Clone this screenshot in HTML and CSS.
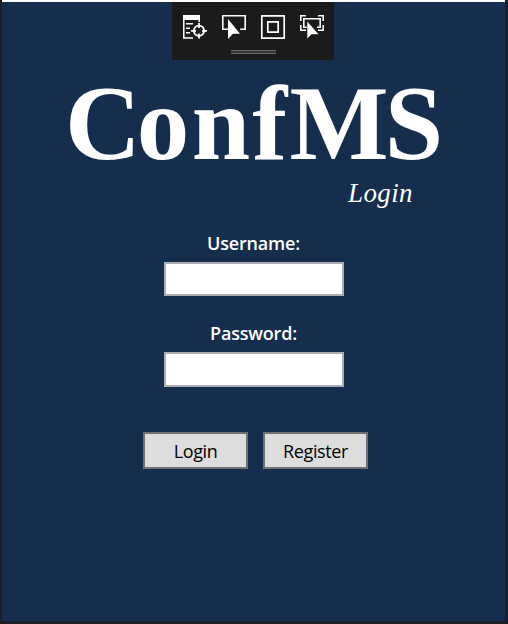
FILE: index.html
```html
<!DOCTYPE html>
<html lang="en">
<head>
<meta charset="utf-8">
<title>ConfMS Login</title>
<link rel="stylesheet" href="styles.css">
</head>
<body>
<main class="window">
  <div class="toolbar">
    <div class="tools">
      <svg width="26" height="26" viewBox="0 0 26 26" fill="none" stroke="#fff" stroke-width="1.5">
        <path d="M1 1h17v5H1z" fill="#fff" stroke="none"/>
        <path d="M1.8 5v19H11M17.2 5v3M4 9.8h7M4 14.2h4M4 18.8h4"/>
        <circle cx="17" cy="16.8" r="5.2" stroke-width="1.8"/>
        <path d="M17 9v5M17 19.6v5M9 16.8h5M20 16.8h5" stroke-width="1.8"/>
      </svg>
      <svg width="26" height="26" viewBox="0 0 26 26" fill="none" stroke="#fff" stroke-width="1.6">
        <path d="M7 15.2H1.8V1.8h22.4v13.4h-5"/>
        <path d="M7 5v20l5-5.2h7z" fill="#fff" stroke="none"/>
      </svg>
      <svg width="26" height="26" viewBox="0 0 26 26" fill="none" stroke="#fff" stroke-width="1.7">
        <path d="M1.8 1.8h22.4v22.4H1.8zM7.8 7.8h10.4v10.4H7.8z"/>
      </svg>
      <svg width="26" height="26" viewBox="0 0 26 26" fill="none" stroke="#fff" stroke-width="1.6">
        <path d="M1.8 7V1.8H7M19 1.8h5.2V7M1.8 11v5.2H7M24.2 11v5.2H19M8 13.2H4.8V4.8h16.4v8.4H18"/>
        <path d="M8 7v18l4.5-4.5H20z" fill="#fff" stroke="#1b1b1c" stroke-width=".6"/>
      </svg>
    </div>
    <div class="grip"></div>
  </div>
  <h1 class="brand"><span class="tight">C</span><span class="loose">onf</span><span class="tight">M</span>S</h1>
  <p class="subtitle">Login</p>
  <form class="form">
    <label class="label" for="user">Username:</label>
    <input class="input" id="user" type="text">
    <label class="label second" for="pass">Password:</label>
    <input class="input taller" id="pass" type="password">
    <div class="actions">
      <button class="button" type="button">Login</button>
      <button class="button" type="button">Register</button>
    </div>
  </form>
</main>
</body>
</html>
```
FILE: styles.css
```css
* { box-sizing: border-box; }
body { margin: 0; background: #1b1e22; }
.window {
  height: 621px;
  margin: 0 3px 3px 2px;
  border-top: 2px solid #fff;
  background: #152e4d;
  color: #fff;
  overflow: hidden;
}
.toolbar {
  width: 162px;
  height: 58px;
  margin-left: 170px;
  padding-top: 12px;
  background: #1b1b1c;
}
.tools { display: flex; gap: 13px; padding-left: 10px; }
.tools svg { display: block; flex: none; }
.grip {
  width: 45px;
  height: 4px;
  margin: 10px 0 0 59px;
  border: solid #6b6b6d;
  border-width: 1px 0;
  background: #333337;
}
.brand {
  height: 100px;
  margin: 14px 0 0 63px;
  font: bold 105px/100px "Liberation Serif", serif;
  white-space: nowrap;
}
.tight { letter-spacing: -4px; }
.loose { letter-spacing: 2.3px; }
.subtitle {
  height: 32px;
  margin: 3px 0 0 346px;
  font: italic 27px/32px "Liberation Serif", serif;
  letter-spacing: .4px;
}
.form {
  display: flex;
  flex-direction: column;
  align-items: center;
  padding-top: 21px;
  font-family: "Open Sans", sans-serif;
}
.label {
  height: 26px;
  margin-bottom: 6px;
  font-size: 18px;
  line-height: 26px;
  font-weight: 600;
  letter-spacing: -.2px;
}
.second { margin-top: 24px; }
.input {
  width: 180px;
  height: 34px;
  padding: 0 6px;
  border: 2px solid #abadb3;
  background: #fff;
}
.taller { height: 35px; }
.actions { display: flex; gap: 15px; margin: 45px 0 0 4px; }
.button {
  width: 105px;
  height: 37px;
  padding: 0;
  border: 2px solid #707070;
  background: #ddd;
  color: #000;
  font: 18px/32px "Open Sans", sans-serif;
  letter-spacing: -.4px;
}
```
